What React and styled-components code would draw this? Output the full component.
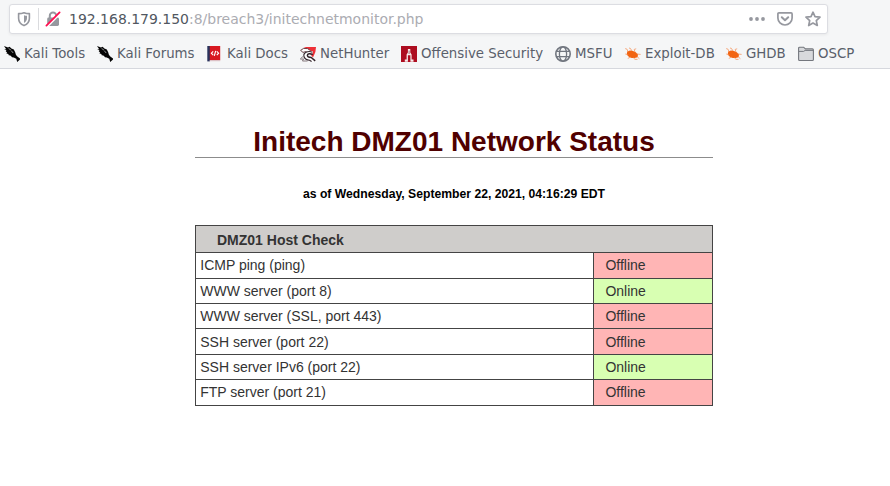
import React from "react";
import styled, { createGlobalStyle } from "styled-components";

const GlobalStyle = createGlobalStyle`
  * { box-sizing: border-box; }
  body { margin: 0; background: #fff; overflow: hidden; }
`;

const Window = styled.div`
  width: 890px;
  height: 486px;
  background: #fff;
`;

const Chrome = styled.header`
  height: 69px;
  padding-top: 4px;
  background: #f5f6f7;
  border-bottom: 1px solid #d6d8de;
  font-family: "DejaVu Sans", sans-serif;
  color: #5a5f6b;
`;

const AddressBar = styled.div`
  display: flex;
  align-items: center;
  width: 819px;
  height: 30px;
  margin-left: 9px;
  padding: 0 6px 0 6px;
  background: #fff;
  border: 1px solid #dcdde2;
  border-radius: 3px;
  box-shadow: 0 1px 3px rgba(0, 0, 0, 0.06);
`;

const Divider = styled.span`
  width: 1px;
  height: 22px;
  margin: 0 6px 0 6px;
  background: #dadbde;
`;

const Url = styled.span`
  flex: 1;
  margin-left: 8px;
  font-size: 13.97px;
  line-height: 18px;
  white-space: nowrap;
  color: #abacb2;
`;

const Host = styled.span`
  color: #515761;
`;

const Actions = styled.div`
  display: flex;
  gap: 12px;
  color: #96989f;
`;

const Bookmarks = styled.nav`
  display: flex;
  align-items: center;
  height: 34px;
  padding: 6px 0 0 4px;
`;

const Bookmark = styled.a`
  display: flex;
  flex: none;
  align-items: center;
  gap: 4px;
  width: ${(p) => p.$width}px;
  font-size: 13.33px;
  line-height: 18px;
  white-space: nowrap;
`;

const Icon = styled.svg`
  display: block;
  flex: none;
  width: 16px;
  height: 16px;
`;

const Report = styled.main`
  display: flex;
  flex-direction: column;
  width: 518px;
  margin-left: 195px;
  padding-top: 57px;
  font-family: "Liberation Sans", Arial, sans-serif;
`;

const Title = styled.h1`
  height: 32px;
  margin: 0;
  border-bottom: 1px solid #8c8c8c;
  font-size: 28px;
  line-height: 32px;
  text-align: center;
  color: #500000;
`;

const Timestamp = styled.p`
  height: 14px;
  margin: 29px 0 24px;
  font-size: 12.18px;
  font-weight: bold;
  line-height: 14px;
  text-align: center;
  color: #000;
`;

const StatusTable = styled.section`
  display: flex;
  flex-direction: column;
  border: 1px solid #444;
  border-bottom: 0;
  font-size: 14px;
  color: #333;
`;

const TableHead = styled.div`
  height: 27px;
  padding: 1px 0 0 21px;
  border-bottom: 1px solid #444;
  background: #cfcdcb;
  font-weight: bold;
  line-height: 26px;
`;

const TableRow = styled.div`
  display: grid;
  grid-template-columns: 397px 1fr;
  height: ${(p) => p.$height}px;
  border-bottom: 1px solid #444;
  line-height: 24px;

  > div {
    padding-top: ${(p) => p.$inset || 0}px;
  }
`;

const Service = styled.div`
  padding-left: 4.25px;
`;

const Status = styled.div`
  padding-left: 11.4px;
  border-left: 1px solid #444;
  background: ${(p) => (p.$online ? "#d8ffb2" : "#ffb5b5")};
`;

const ShieldIcon = () => (
  <Icon viewBox="0 0 16 16">
    <path d="M8 1.7C6.1 2.4 4.3 2.6 2.6 2.6v4.6c0 3.5 1.9 6 5.4 7.4 3.5-1.4 5.4-3.9 5.4-7.4V2.6C11.7 2.6 9.9 2.4 8 1.7z" fill="none" stroke="#96989f" strokeWidth="1.6" strokeLinejoin="round" />
    <path d="M8 4.2v7.7c2.1-1.1 3-2.6 3-4.8V4.8C9.9 4.8 8.8 4.6 8 4.2z" fill="#96989f" />
  </Icon>
);

const InsecureIcon = () => (
  <Icon viewBox="0 0 16 16">
    <path d="M4.8 7V4.8a3.2 3.2 0 0 1 6.4 0V7" fill="none" stroke="#96989f" strokeWidth="2" />
    <rect x="2.2" y="6.6" width="11.8" height="8.4" rx="1.4" fill="#96989f" />
    <path d="M1.8 15.6 15.2 2" stroke="#fff" strokeWidth="2.6" />
    <path d="M1.4 14.6 14.6 1.4" stroke="#ff0f50" strokeWidth="1.8" strokeLinecap="round" />
  </Icon>
);

const DotsIcon = () => (
  <Icon viewBox="0 0 16 16" fill="currentColor">
    <circle cx="2" cy="8" r="1.9" />
    <circle cx="8" cy="8" r="1.9" />
    <circle cx="14" cy="8" r="1.9" />
  </Icon>
);

const PocketIcon = () => (
  <Icon viewBox="0 0 16 16" fill="none" stroke="currentColor" strokeWidth="1.7" strokeLinejoin="round" strokeLinecap="round">
    <path d="M1.9 1.9h12.2a1 1 0 0 1 1 1v4.2a7.1 6.9 0 0 1-14.2 0V2.9a1 1 0 0 1 1-1z" />
    <path d="M4.8 6.3 8 9.3l3.2-3" strokeWidth="2" />
  </Icon>
);

const StarIcon = () => (
  <Icon viewBox="0 0 16 16">
    <path d="m8 1.2 2 4.5 5 .5-3.7 3.4 1 4.9L8 12l-4.3 2.5 1-4.9L1 6.2l5-.5z" fill="none" stroke="currentColor" strokeWidth="1.7" strokeLinejoin="round" />
  </Icon>
);

const KaliIcon = () => (
  <Icon viewBox="0 0 16 16">
    <path d="M0 0 4 1.4 5.6.8 7.4 2.4l2.4 1 1.4 2.8.6 2.4 1.2 1.6 3 2.2v1.2L13.2 16l-.9-3.2-2.5-1.2-1.8-.4-1.2-1.4-2.6-.8.6-.8-2.6-.9 1-.6L1.6 5l1-.4L.2 3l2 .2z" fill="#050505" />
    <path d="m4.6 2.6 2.2 1.2m.4.8 2 2.4" fill="none" stroke="#cfd1d3" strokeWidth=".7" />
  </Icon>
);

const DocsIcon = () => (
  <Icon viewBox="0 0 16 16">
    <path d="M1.2 0h12v14.2h-12z" fill="#d81921" />
    <path d="M.3 0h2.5v15.4H.3z" fill="#29335c" />
    <path d="M2.8 14.2h10.4v1H2.8z" fill="#d9bfc4" />
    <path d="M6.2 5.3 4.4 7.2l1.8 1.9m3.6-3.8 1.8 1.9-1.8 1.9M8.7 4.8 7.3 9.8" fill="none" stroke="#fff" strokeWidth="1.15" />
  </Icon>
);

const NetHunterIcon = () => (
  <Icon viewBox="0 0 16 16">
    <path d="M3.6 2 6 1h10l-.6 5-2.4 5.6L8.6 6z" fill="#ee3037" />
    <path d="M.6 4.4 3.6 2.4l4 .2 3.6 2.7-3.2.9-2-.7L3 6.4z" fill="#fff" stroke="#5b3034" strokeWidth=".9" />
    <path d="M12.6 7C8.8 5.6 5.2 6.6 5.2 9.4c0 2.6 2.6 3.6 5.1 3.8l4 2.2" fill="none" stroke="#fff" strokeWidth="3" />
    <path d="M12.4 6.2C8.4 4.6 3.8 6 3.8 9.3c0 3.2 3 4.9 5.8 4.9l2 1.3" fill="none" stroke="#33242b" strokeWidth="1.1" />
    <path d="M12.8 8.6c-2.6-1.6-5.4-.9-5.4.7 0 1.7 2 2.2 3.8 2.2l4 3.4" fill="none" stroke="#33242b" strokeWidth="1.5" />
    <path d="M3.6 10.6C2 10.8.8 12 .5 13.2l3-.3-1 2.1h5" fill="none" stroke="#6b5a60" strokeWidth=".8" />
  </Icon>
);

const OffensiveIcon = () => (
  <Icon viewBox="0 0 16 16">
    <path d="M0 0h16v16H0z" fill="#ad0d20" />
    <path d="M6.9 3h2.4v3.5l1.3 2v5h1.9v2.2H9.4V9.2H6.9v6.5H3.8v-2.2h1.8v-5l1.3-2z" fill="#f8eeee" />
    <path d="M8.1 4.6V8" stroke="#8d3442" strokeWidth=".7" />
  </Icon>
);

const GlobeIcon = () => (
  <Icon viewBox="0 0 16 16" fill="none" stroke="#71767f" strokeWidth="1.3">
    <circle cx="8" cy="8" r="7.2" strokeWidth="1.6" />
    <ellipse cx="8" cy="8" rx="3.6" ry="7.2" />
    <path d="M1.3 5.4h13.4M1.3 10.6h13.4" />
  </Icon>
);

const ExploitIcon = () => (
  <Icon viewBox="0 0 16 16">
    <path d="M2.2 5.4 5 4.4l3 .5 2.8 1.3 2.2 2.2-.4 2.8-3 .9c-3.3.2-6.7-1.3-7.8-3.7z" fill="#f26412" />
    <path d="M3.2 5.8 1.8 3 .2 2.6M7 5 5.4 2.4 4 2m6 4.2L9.2 3.4l2-.6m.6 5.2 3.8.4M3.4 8.7.3 8m5.3 3.1L2.8 12.4m5.7-.9 1.2 1.8 2.8.1m0-2.4 1.9 1.7" fill="none" stroke="#f58a4e" strokeWidth=".7" />
  </Icon>
);

const FolderIcon = () => (
  <Icon viewBox="0 0 16 16">
    <path d="M.6 2.2a1 1 0 0 1 1-1h4l1.8 1.7h7a1 1 0 0 1 1 1v9.6a1 1 0 0 1-1 1H1.6a1 1 0 0 1-1-1z" fill="#d8d9dc" stroke="#74777e" strokeWidth="1.1" />
    <path d="M.8 5.4h4.8l1.5-1h8.2" fill="none" stroke="#74777e" />
  </Icon>
);

const bookmarks = [
  { label: "Kali Tools", icon: KaliIcon, width: 93 },
  { label: "Kali Forums", icon: KaliIcon, width: 110 },
  { label: "Kali Docs", icon: DocsIcon, width: 93 },
  { label: "NetHunter", icon: NetHunterIcon, width: 101 },
  { label: "Offensive Security", icon: OffensiveIcon, width: 154 },
  { label: "MSFU", icon: GlobeIcon, width: 70 },
  { label: "Exploit-DB", icon: ExploitIcon, width: 101 },
  { label: "GHDB", icon: ExploitIcon, width: 72 },
  { label: "OSCP", icon: FolderIcon, width: 60 },
];

const checks = [
  { service: "ICMP ping (ping)", online: false, height: 26 },
  { service: "WWW server (port 8)", online: true, height: 25 },
  { service: "WWW server (SSL, port 443)", online: false, height: 25 },
  { service: "SSH server (port 22)", online: false, height: 26, inset: 1 },
  { service: "SSH server IPv6 (port 22)", online: true, height: 25 },
  { service: "FTP server (port 21)", online: false, height: 26 },
];

export default function App() {
  return (
    <Window>
      <GlobalStyle />
      <Chrome>
        <AddressBar>
          <ShieldIcon />
          <Divider />
          <InsecureIcon />
          <Url><Host>192.168.179.150</Host>:8/breach3/initechnetmonitor.php</Url>
          <Actions><DotsIcon /><PocketIcon /><StarIcon /></Actions>
        </AddressBar>
        <Bookmarks>
          {bookmarks.map(({ label, icon: Glyph, width }) => (
            <Bookmark key={label} $width={width}><Glyph />{label}</Bookmark>
          ))}
        </Bookmarks>
      </Chrome>
      <Report>
        <Title>Initech DMZ01 Network Status</Title>
        <Timestamp>as of Wednesday, September 22, 2021, 04:16:29 EDT</Timestamp>
        <StatusTable>
          <TableHead>DMZ01 Host Check</TableHead>
          {checks.map(({ service, online, height, inset }) => (
            <TableRow key={service} $height={height} $inset={inset}>
              <Service>{service}</Service>
              <Status $online={online}>{online ? "Online" : "Offline"}</Status>
            </TableRow>
          ))}
        </StatusTable>
      </Report>
    </Window>
  );
}
